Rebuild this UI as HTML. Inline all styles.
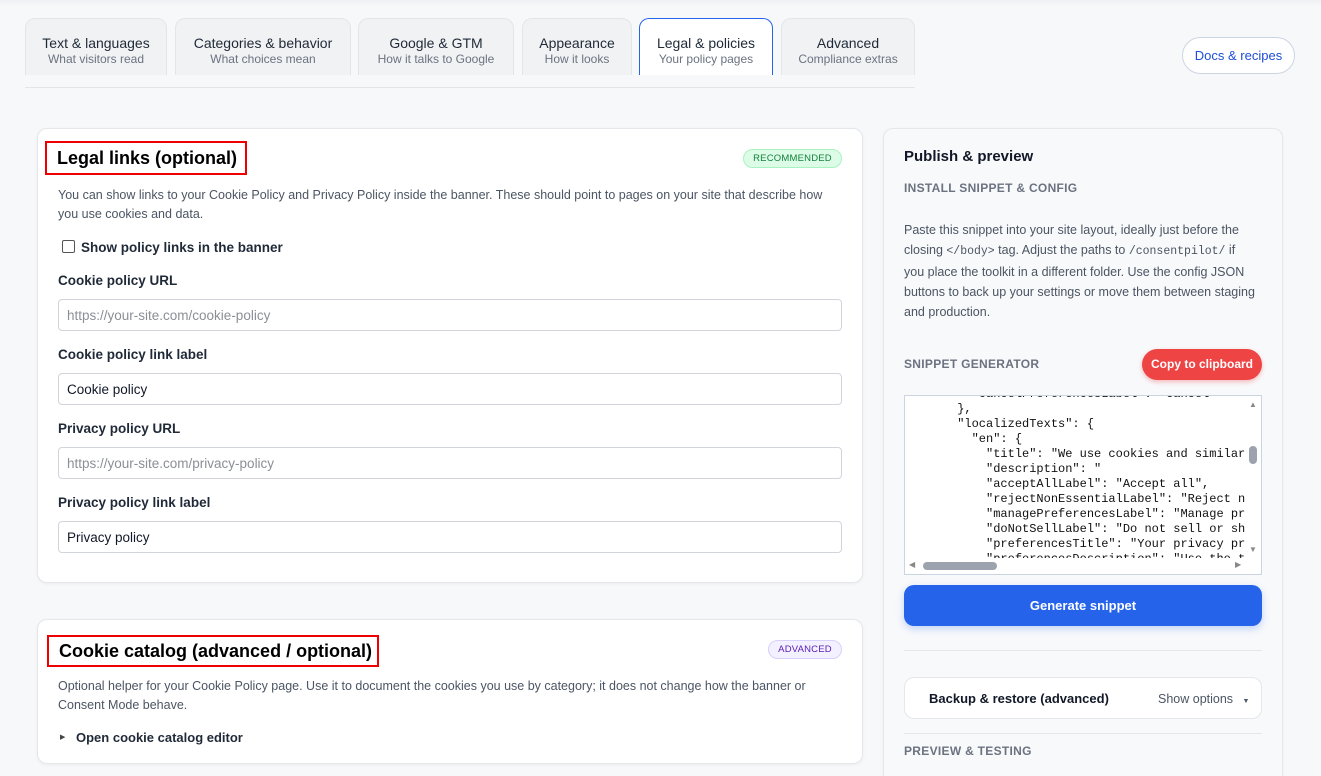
<!DOCTYPE html>
<html><head><meta charset="utf-8"><style>
*{box-sizing:border-box;margin:0;padding:0}
html,body{width:1321px;height:776px;overflow:hidden}
body{background:#f7f8fa;font-family:"Liberation Sans",sans-serif;position:relative;color:#111827}
.a{position:absolute}
.tab{position:absolute;top:18px;height:57px;background:#f1f2f4;border:1px solid #e3e5e9;border-bottom:none;border-radius:10px 10px 0 0;text-align:center;padding-top:16px}
.tab b{display:block;font-weight:normal;font-size:14px;color:#1f2937;line-height:16px}
.tab i{display:block;font-style:normal;font-size:12px;color:#6b7280;line-height:16px}
.tab.on{background:#fff;border:1px solid #2563eb;border-bottom:none}
.card{position:absolute;background:#fff;border:1px solid #e5e7eb;border-radius:10px;box-shadow:0 1px 3px rgba(0,0,0,.05)}
.h{position:absolute;border:2px solid #e00;font-size:18px;font-weight:bold;color:#000;padding:5px 10px 0 10px;white-space:nowrap}
.p{position:absolute;font-size:12.5px;color:#4b5563;line-height:19px}
.lbl{position:absolute;left:58px;font-size:13.5px;font-weight:bold;color:#1f2937}
.inp{position:absolute;left:58px;width:784px;height:32px;border:1px solid #d1d5db;border-radius:4px;font-size:13.5px;padding:8px 8px;line-height:15px}
.badge{position:absolute;font-size:9.5px;border-radius:10px;padding:3px 0;text-align:center;letter-spacing:.2px}
.cap{position:absolute;left:904px;font-size:12px;font-weight:bold;color:#6b7280;letter-spacing:.3px}
pre{font-family:"Liberation Mono",monospace;font-size:12px;line-height:15px;color:#111}
</style></head><body>
<div class="a" style="left:0;top:0;width:1321px;height:6px;background:linear-gradient(#eef0f3,#f7f8fa)"></div>
<div class="tab" style="left:25px;width:142px"><b>Text &amp; languages</b><i>What visitors read</i></div>
<div class="tab" style="left:175px;width:176px"><b>Categories &amp; behavior</b><i>What choices mean</i></div>
<div class="tab" style="left:358px;width:156px"><b>Google &amp; GTM</b><i>How it talks to Google</i></div>
<div class="tab" style="left:522px;width:110px"><b>Appearance</b><i>How it looks</i></div>
<div class="tab on" style="left:639px;width:134px"><b>Legal &amp; policies</b><i>Your policy pages</i></div>
<div class="tab" style="left:781px;width:134px"><b>Advanced</b><i>Compliance extras</i></div>
<div class="a" style="left:25px;top:87px;width:890px;height:1px;background:#e3e5e9"></div>
<div class="a" style="left:1182px;top:37px;width:113px;height:37px;border:1px solid #cbd5e1;border-radius:19px;background:#fff;color:#1d4ed8;font-size:13px;text-align:center;line-height:35px">Docs &amp; recipes</div>

<div class="card" style="left:37px;top:128px;width:826px;height:455px"></div>
<div class="h" style="left:45px;top:141px;width:202px;height:34px">Legal links (optional)</div>
<div class="badge" style="left:743px;top:149px;width:99px;background:#dcfce7;border:1px solid #a7f3c0;color:#15803d">RECOMMENDED</div>
<div class="p" style="left:58px;top:186px;width:770px">You can show links to your Cookie Policy and Privacy Policy inside the banner. These should point to pages on your site that describe how you use cookies and data.</div>
<div class="a" style="left:62px;top:240px;width:13px;height:13px;border:1px solid #555;border-radius:2px;background:#fff"></div>
<div class="lbl" style="left:81px;top:240px">Show policy links in the banner</div>
<div class="lbl" style="top:273px">Cookie policy URL</div>
<div class="inp" style="top:299px;color:#8b8f96">https://your-site.com/cookie-policy</div>
<div class="lbl" style="top:347px">Cookie policy link label</div>
<div class="inp" style="top:373px">Cookie policy</div>
<div class="lbl" style="top:421px">Privacy policy URL</div>
<div class="inp" style="top:447px;color:#8b8f96">https://your-site.com/privacy-policy</div>
<div class="lbl" style="top:495px">Privacy policy link label</div>
<div class="inp" style="top:521px">Privacy policy</div>

<div class="card" style="left:37px;top:619px;width:826px;height:145px"></div>
<div class="h" style="left:47px;top:635px;width:332px;height:32px;padding-top:4px">Cookie catalog (advanced / optional)</div>
<div class="badge" style="left:768px;top:640px;width:74px;background:#f3f0ff;border:1px solid #d8cffc;color:#5b21b6">ADVANCED</div>
<div class="p" style="left:58px;top:677px;width:790px">Optional helper for your Cookie Policy page. Use it to document the cookies you use by category; it does not change how the banner or Consent Mode behave.</div>
<div class="a" style="left:60px;top:733px;font-size:7px;color:#444">&#9654;</div>
<div class="lbl" style="left:76px;top:730px;font-size:13px">Open cookie catalog editor</div>

<div class="card" style="left:883px;top:128px;width:400px;height:680px;background:#f8f9fb"></div>
<div class="a" style="left:904px;top:148px;font-size:15px;font-weight:bold">Publish &amp; preview</div>
<div class="cap" style="top:181px">INSTALL SNIPPET &amp; CONFIG</div>
<div class="p" style="left:904px;top:220px;width:352px;font-size:12.5px;line-height:20px">Paste this snippet into your site layout, ideally just before the closing <span style="font-family:'Liberation Mono',monospace;font-size:11.5px">&lt;/body&gt;</span> tag. Adjust the paths to <span style="font-family:'Liberation Mono',monospace;font-size:11.5px">/consentpilot/</span> if you place the toolkit in a different folder. Use the config JSON buttons to back up your settings or move them between staging and production.</div>
<div class="cap" style="top:357px">SNIPPET GENERATOR</div>
<div class="a" style="left:1142px;top:349px;width:120px;height:31px;border-radius:16px;background:#ef4444;color:#fff;font-size:12px;font-weight:bold;text-align:center;line-height:31px;box-shadow:0 2px 5px rgba(239,68,68,.35)">Copy to clipboard</div>
<div class="a" style="left:904px;top:395px;width:358px;height:180px;border:1px solid #cbd5e1;background:#fff;overflow:hidden">
<pre style="position:absolute;left:9px;top:-9px">        "cancelPreferencesLabel": "Cancel"
      },
      "localizedTexts": {
        "en": {
          "title": "We use cookies and similar
          "description": "
          "acceptAllLabel": "Accept all",
          "rejectNonEssentialLabel": "Reject nc
          "managePreferencesLabel": "Manage pre
          "doNotSellLabel": "Do not sell or sha
          "preferencesTitle": "Your privacy pre
          "preferencesDescription": "Use the to</pre>
<div class="a" style="left:341px;top:0;width:16px;height:178px;background:#fff"></div>
<div class="a" style="left:0;top:162px;width:357px;height:17px;background:#fff"></div>
<div class="a" style="left:344px;top:50px;width:8px;height:18px;border-radius:4px;background:#9ca3af"></div>
<div class="a" style="left:344px;top:4px;font-size:8px;color:#888">&#9650;</div>
<div class="a" style="left:344px;top:149px;font-size:8px;color:#888">&#9660;</div>
<div class="a" style="left:18px;top:166px;width:74px;height:8px;border-radius:4px;background:#9ca3af"></div>
<div class="a" style="left:4px;top:164px;font-size:8px;color:#888">&#9664;</div>
<div class="a" style="left:330px;top:164px;font-size:8px;color:#888">&#9654;</div>
</div>
<div class="a" style="left:904px;top:585px;width:358px;height:41px;border-radius:10px;background:#2563eb;color:#fff;font-size:13px;font-weight:bold;text-align:center;line-height:41px;box-shadow:0 3px 8px rgba(37,99,235,.25)">Generate snippet</div>
<div class="a" style="left:904px;top:650px;width:358px;height:1px;background:#e5e7eb"></div>
<div class="a" style="left:904px;top:677px;width:358px;height:42px;border:1px solid #e5e7eb;border-radius:10px;background:#fff"></div>
<div class="a" style="left:929px;top:691px;font-size:13px;font-weight:bold">Backup &amp; restore (advanced)</div>
<div class="a" style="left:1158px;top:692px;font-size:12.5px;color:#4b5563">Show options <span style="font-size:7px;margin-left:6px">&#9660;</span></div>
<div class="a" style="left:904px;top:733px;width:358px;height:1px;background:#e5e7eb"></div>
<div class="cap" style="top:744px">PREVIEW &amp; TESTING</div>
</body></html>
